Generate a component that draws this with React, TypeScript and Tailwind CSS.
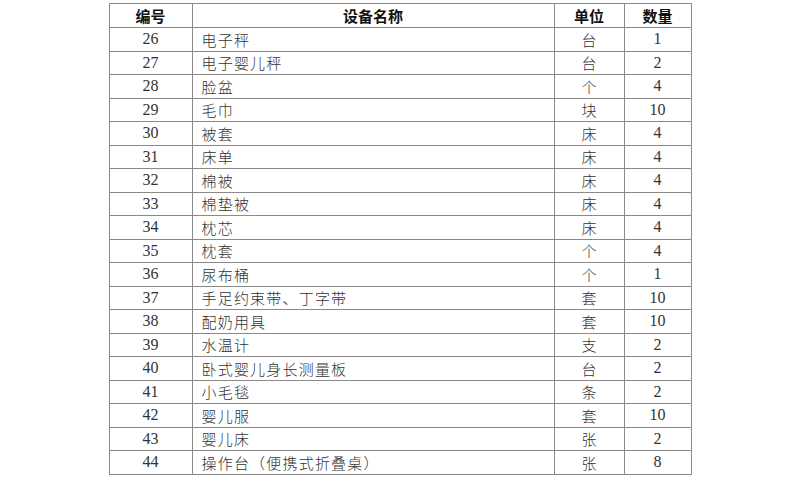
import React from "react";

const rows: [string, string, string, string][] = [
  ["26", "电子秤", "台", "1"],
  ["27", "电子婴儿秤", "台", "2"],
  ["28", "脸盆", "个", "4"],
  ["29", "毛巾", "块", "10"],
  ["30", "被套", "床", "4"],
  ["31", "床单", "床", "4"],
  ["32", "棉被", "床", "4"],
  ["33", "棉垫被", "床", "4"],
  ["34", "枕芯", "床", "4"],
  ["35", "枕套", "个", "4"],
  ["36", "尿布桶", "个", "1"],
  ["37", "手足约束带、丁字带", "套", "10"],
  ["38", "配奶用具", "套", "10"],
  ["39", "水温计", "支", "2"],
  ["40", "卧式婴儿身长测量板", "台", "2"],
  ["41", "小毛毯", "条", "2"],
  ["42", "婴儿服", "套", "10"],
  ["43", "婴儿床", "张", "2"],
  ["44", "操作台（便携式折叠桌）", "张", "8"],
];

export default function App() {
  return (
    <div className="w-[800px] h-[482px] bg-white pt-[3px]" style={{ fontFamily: '"Liberation Serif", "Noto Sans CJK SC", serif' }}>
      <table className="mx-auto border-collapse w-[582px] table-fixed text-[15px] leading-none">
        <colgroup>
          <col className="w-[83px]" />
          <col className="w-[362px]" />
          <col className="w-[70px]" />
          <col className="w-[67px]" />
        </colgroup>
        <thead>
          <tr className="h-[24px]">
            {["编号", "设备名称", "单位", "数量"].map((h) => (
              <th key={h} className="border border-[#8a8a8a] text-center font-bold text-[15px] text-[#111] p-0" style={{ fontFamily: '"Noto Sans CJK SC", sans-serif' }}>
                {h}
              </th>
            ))}
          </tr>
        </thead>
        <tbody className="text-[#333]">
          {rows.map((r) => (
            <tr key={r[0]} className="h-[23.5px]">
              <td className="border border-[#8a8a8a] text-center p-0 text-[16px]">{r[0]}</td>
              <td className="border border-[#8a8a8a] text-left pl-[9px] p-0 font-light tracking-[1.2px]" style={{ fontFamily: '"Noto Sans CJK SC", sans-serif' }}>{r[1]}</td>
              <td className="border border-[#8a8a8a] text-center p-0 font-light" style={{ fontFamily: '"Noto Sans CJK SC", sans-serif' }}>{r[2]}</td>
              <td className="border border-[#8a8a8a] text-center p-0 text-[16px]">{r[3]}</td>
            </tr>
          ))}
        </tbody>
      </table>
    </div>
  );
}
